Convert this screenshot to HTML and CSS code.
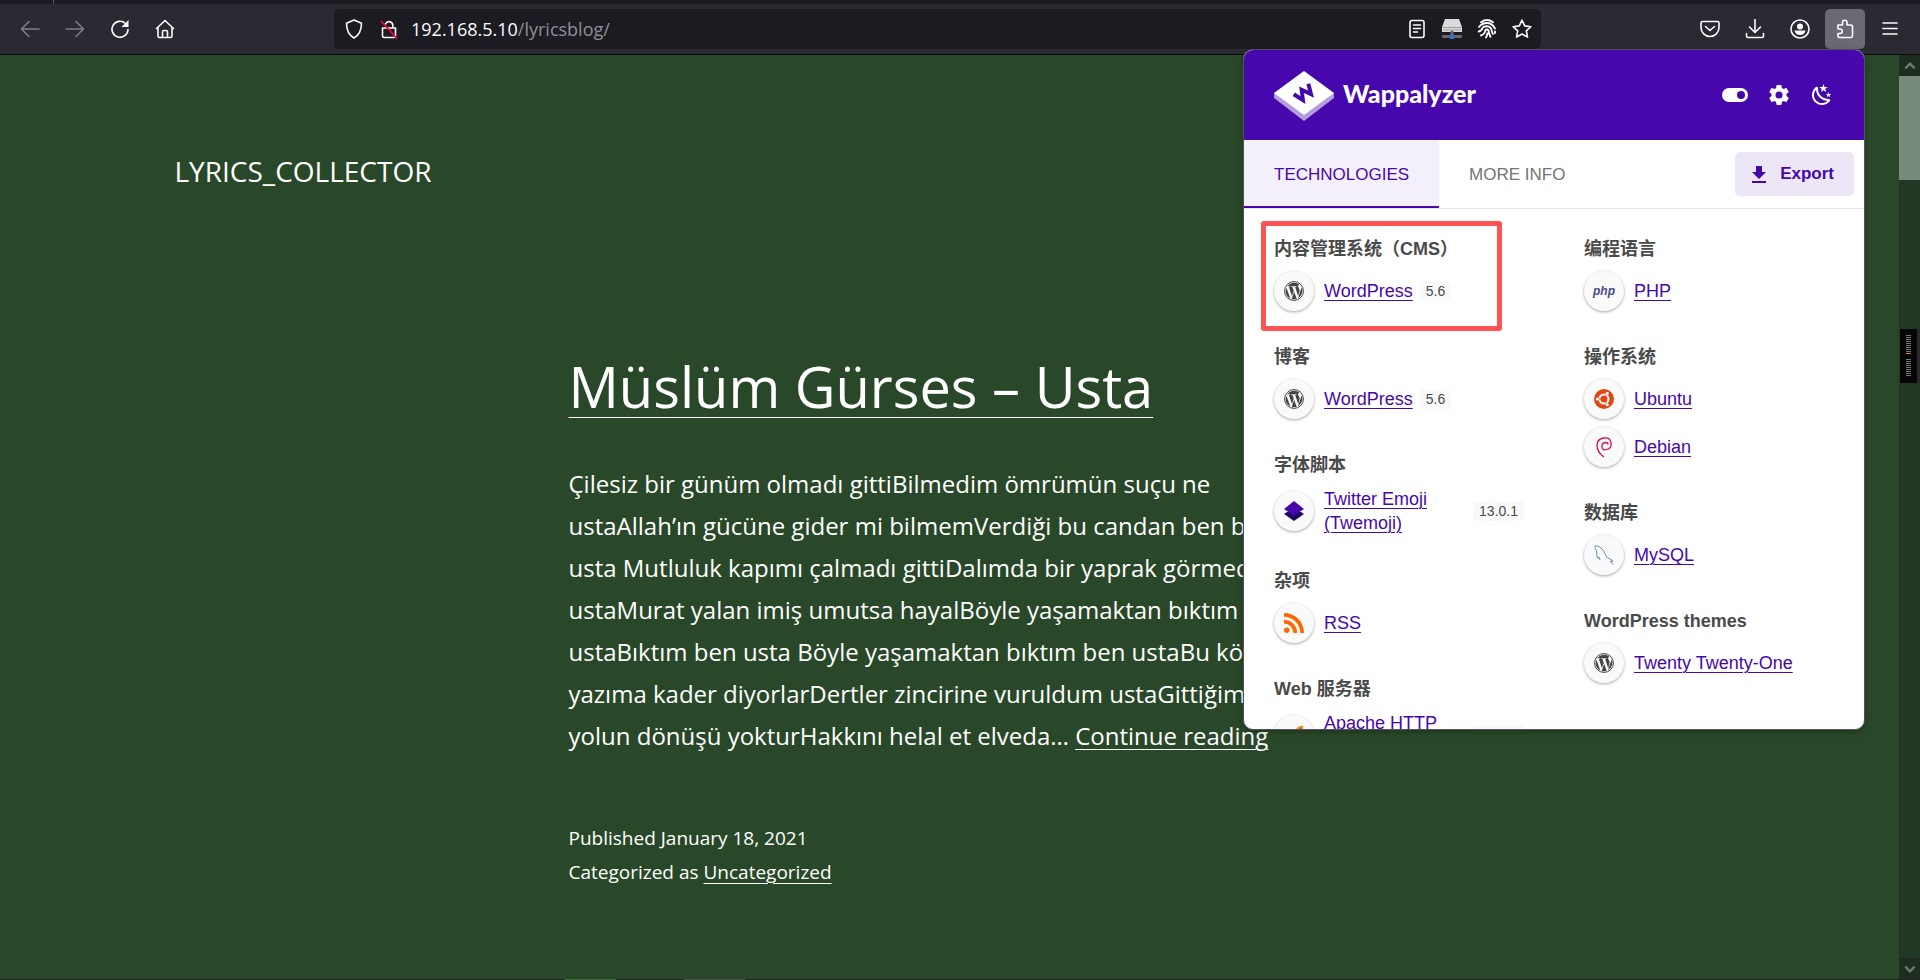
FILE: index.html
```html
<!DOCTYPE html>
<html lang="en">

<head>
  <meta charset="UTF-8" />
  <title>Lyrics_Collector</title>
  <link rel="stylesheet" href="styles.css">
</head>

<body>

  <!-- shared icons -->
  <svg class="sprite" aria-hidden="true">
    <symbol id="wp" viewBox="0 0 24 24">
      <circle cx="12" cy="12" r="11.300" fill="none" stroke="#464342" stroke-width="1.200" />
      <path fill="#464342" d="M2 12c0 4 2.300 7.400 5.600 9L2.900 8A9.900 9.900 0 0 0 2 12zm16.700-.5c0-1.200-.4-2.100-.8-2.800-.5-.8-1-1.500-1-2.300 0-.9.7-1.800 1.700-1.800h.1A10 10 0 0 0 3.700 6.500h.6c1.100 0 2.700-.1 2.700-.1.500 0 .6.800 0 .8 0 0-.5.1-1.100.1l3.600 10.800 2.200-6.500-1.600-4.300-1-.1c-.6 0-.5-.9 0-.8 0 0 1.700.1 2.700.1 1.100 0 2.700-.1 2.700-.1.600 0 .6.800.1.800 0 0-.6.100-1.200.1l3.600 10.700 1-3.300c.4-1.300.7-2.300.7-3.200zM12.200 12.900l-3 8.700a10 10 0 0 0 6.100-.2l-.1-.1zM20.800 7.200c0 1.800-.3 2.700-1 4.500l-3 8.900A10 10 0 0 0 20.800 7.200z" />
    </symbol>
  </svg>

  <div class="tabstrip"></div>

  <header class="toolbar">
    <nav class="nav-buttons">
      <button class="icon-btn dim" aria-label="Back">
        <svg class="icon" viewBox="0 0 20 20"><path d="M19 10H2M9 2.500L1.500 10 9 17.500" /></svg>
      </button>
      <button class="icon-btn dim" aria-label="Forward">
        <svg class="icon" viewBox="0 0 20 20"><path d="M1 10h17M11 2.500l7.500 7.500-7.500 7.500" /></svg>
      </button>
      <button class="icon-btn" aria-label="Reload">
        <svg class="icon" viewBox="0 0 20 20"><path d="M18 10.500A8 8 0 1 1 15.500 4.500" /><path class="fill" d="M18.500 1v7h-7z" /></svg>
      </button>
      <button class="icon-btn" aria-label="Home">
        <svg class="icon" viewBox="0 0 20 20"><path d="M1.500 9.500L10 1.500l8.500 8M3 8.500V17q0 1.500 1.500 1.500h11Q17 18.500 17 17V8.500M7.500 18v-5q0-1.500 1.500-1.500h2q1.500 0 1.500 1.500v5" /></svg>
      </button>
    </nav>

    <div class="urlbar">
      <svg class="icon" viewBox="0 0 20 20"><path d="M10 1l7.500 3.200c0 6.500-1.500 11.300-7.500 14.800C4 15.500 2.500 10.700 2.500 4.200z" /></svg>
      <svg class="icon" viewBox="0 0 20 20"><path d="M6.500 5a3.800 3.800 0 0 1 7.300 1.500V9M3.500 9h13v8q0 1.500-1.500 1.500H5Q3.500 18.500 3.500 17z" /><path class="slash" d="M2.500 2.500l15 16.500" /></svg>
      <div class="url" role="textbox" aria-label="Address">192.168.5.10<span>/lyricsblog/</span></div>
      <div class="url-actions">
        <svg class="icon" viewBox="0 0 20 20"><rect x="3" y="1.500" width="14" height="17" rx="2" /><path d="M6.500 6h7M6.500 9.500h7M6.500 13h4" /></svg>
        <svg class="icon" viewBox="0 0 20 20"><path fill="#dadada" stroke="none" d="M3 0h14l3 8v5H0V8z" /><path stroke="#9a9a9a" stroke-width="1" d="M1 8.500h18M2 11h16" /><path stroke="#68686c" stroke-width="3" d="M1 17.500h18M10 13v3" /><path fill="#2f6fd8" stroke="none" d="M8 15.500h4V20H8z" /></svg>
        <svg class="icon" viewBox="0 0 20 20"><path stroke-width="1.900" d="M4 3.200Q10-1.200 16 3.200M2 8Q5 4 10 4t8 5.500M1.800 12.500Q5 11.500 5.500 9 7 7 10 7.200q4 .3 4.700 4.300.5 2.500 1.300 3.500M4 16.500q4-1.500 4.500-5.500 1.500-1.300 3 .3.200 3.500 2 6.500M9 18.500q1.200-1.500 1.300-4M18 12.500v1.500" /></svg>
        <svg class="icon" viewBox="0 0 20 20"><path d="M10 1.200l2.700 5.700 6.200.8-4.600 4.200 1.200 6.200L10 15l-5.500 3.100 1.200-6.200L1.100 7.700l6.200-.8z" /></svg>
      </div>
    </div>

    <div class="tools">
      <button class="icon-btn" aria-label="Pocket">
        <svg class="icon" viewBox="0 0 20 20"><path d="M2.500 2.500h15q1.500 0 1.500 1.500v4.500a9 9 0 0 1-18 0V4q0-1.500 1.500-1.500zM5.500 7.500L10 11.500l4.500-4" /></svg>
      </button>
      <button class="icon-btn" aria-label="Downloads">
        <svg class="icon" viewBox="0 0 20 20"><path d="M10 0v13M4.500 8l5.500 5.500L15.500 8M1.500 14.500V17q0 1.500 1.500 1.500h14q1.500 0 1.500-1.500v-2.500" /></svg>
      </button>
      <button class="icon-btn" aria-label="Account">
        <svg class="icon" viewBox="0 0 20 20"><circle cx="10" cy="10" r="9" /><circle class="fill" cx="10" cy="7.500" r="3" /><path class="fill" d="M4.500 11.500h11q-1 4.500-5.500 4.500t-5.500-4.500z" /></svg>
      </button>
      <button class="icon-btn active" aria-label="Extensions">
        <svg class="icon" viewBox="0 0 20 20"><path d="M3 6h4.500V3.500a2.200 2.200 0 0 1 4.500 0V6h4q1.500 0 1.500 1.500V17q0 1.500-1.500 1.500H4.500Q3 18.500 3 17v-2.500h2a2.200 2.200 0 0 0 0-4.500H3z" /></svg>
      </button>
      <button class="icon-btn" aria-label="Menu">
        <svg class="icon" viewBox="0 0 20 20"><path d="M3 4h14M3 9.500h14M3 15h14" /></svg>
      </button>
    </div>
  </header>

  <div class="viewport">
    <main class="page">
      <p class="site-title">LYRICS_COLLECTOR</p>

      <article class="post">
        <h2 class="entry-title"><a href="#">Müslüm Gürses – Usta</a></h2>
        <p class="excerpt">
          Çilesiz bir günüm olmadı gittiBilmedim ömrümün suçu ne<br>
          ustaAllah’ın gücüne gider mi bilmemVerdiği bu candan ben bıktım<br>
          usta Mutluluk kapımı çalmadı gittiDalımda bir yaprak görmedim<br>
          ustaMurat yalan imiş umutsa hayalBöyle yaşamaktan bıktım ben<br>
          ustaBıktım ben usta Böyle yaşamaktan bıktım ben ustaBu kötü<br>
          yazıma kader diyorlarDertler zincirine vuruldum ustaGittiğim bu<br>
          yolun dönüşü yokturHakkını helal et elveda… <a href="#">Continue reading</a>
        </p>
        <footer class="entry-footer">
          Published January 18, 2021<br>
          Categorized as <a href="#">Uncategorized</a>
        </footer>
      </article>
    </main>

    <div class="scrollbar">
      <div class="scroll-arrow"><svg viewBox="0 0 12 12"><path d="M2 8l4-4 4 4" /></svg></div>
      <div class="scroll-thumb"></div>
      <div class="scroll-arrow end"><svg viewBox="0 0 12 12"><path d="M2 4l4 4 4-4" /></svg></div>
    </div>
  </div>

  <div class="taskbar-edge"><i></i><i></i></div>

  <div class="meter"><i></i><b></b><i></i></div>

  <section class="popup">
    <div class="popup-header">
      <svg class="logo" viewBox="0 0 60 50">
        <path fill="#b59ddd" d="M0 27L30 50 60 27V22H0z" />
        <path fill="#fff" d="M30 0l30 22-30 22L0 22z" />
        <path class="logo-w" d="M-9-5l4 10L0-4l5 9L9-5" transform="translate(30 22) rotate(-36)" />
      </svg>
      <span class="brand">Wappalyzer</span>
      <div class="popup-actions">
        <button class="plain-btn" aria-label="Toggle">
          <svg width="26" height="14" viewBox="0 0 26 14"><rect width="26" height="14" rx="7" fill="#fff" /><circle cx="19" cy="7" r="4" fill="#4608ad" /></svg>
        </button>
        <button class="plain-btn" aria-label="Settings">
          <svg width="24" height="24" viewBox="0 0 24 24"><path fill="#fff" d="M12 15.500A3.500 3.500 0 0 1 8.500 12 3.500 3.500 0 0 1 12 8.500a3.500 3.500 0 0 1 3.500 3.500 3.500 3.500 0 0 1-3.500 3.500m7.430-2.530c.04-.32.07-.64.07-.97s-.03-.66-.07-1l2.110-1.630c.19-.15.24-.42.12-.64l-2-3.460c-.12-.22-.39-.31-.61-.22l-2.490 1c-.52-.39-1.060-.73-1.690-.98l-.37-2.650A.5.5 0 0 0 14 2h-4c-.25 0-.46.18-.5.42l-.37 2.650c-.63.25-1.170.59-1.690.98l-2.490-1c-.22-.09-.49 0-.61.22l-2 3.460c-.13.22-.07.49.12.64L4.570 11c-.04.34-.07.67-.07 1s.03.65.07.97l-2.110 1.660c-.19.15-.25.42-.12.64l2 3.460c.12.22.39.3.61.22l2.490-1.010c.52.4 1.060.74 1.690.99l.37 2.650c.04.24.25.42.5.42h4c.25 0 .46-.18.5-.42l.37-2.650c.63-.26 1.170-.59 1.690-.99l2.490 1.010c.22.08.49 0 .61-.22l2-3.460c.12-.22.07-.49-.12-.64z" /></svg>
        </button>
        <button class="plain-btn" aria-label="Dark mode">
          <svg width="24" height="24" viewBox="0 0 24 24"><path fill="#fff" d="M17.750 4.090l-2.530 1.940.91 3.060-2.630-1.810-2.630 1.810.91-3.060-2.530-1.940L12.440 4l1.060-3 1.060 3zM21.250 11l-1.640 1.250.59 1.980-1.700-1.170-1.700 1.170.59-1.980L15.750 11l2.060-.05L18.500 9l.69 1.950zM18.970 15.950c.83-.08 1.720 1.100 1.190 1.850-.32.45-.66.87-1.080 1.270C15.170 23 8.840 23 4.940 19.070c-3.910-3.900-3.910-10.240 0-14.140.4-.4.820-.76 1.270-1.080.75-.53 1.930.36 1.850 1.190-.27 2.860.69 5.830 2.890 8.020a9.960 9.960 0 0 0 8.020 2.890m-1.640 2.020a12.080 12.080 0 0 1-7.800-3.470c-2.170-2.190-3.330-5-3.490-7.820-2.810 3.140-2.700 7.960.31 10.980 3.020 3.010 7.840 3.120 10.980.31z" /></svg>
        </button>
      </div>
    </div>

    <div class="tabs">
      <button class="tab selected">TECHNOLOGIES</button>
      <button class="tab">MORE INFO</button>
      <button class="export">
        <svg width="14" height="17" viewBox="0 0 14 17"><path fill="#4608ad" d="M4 0h6v6h4l-7 7-7-7h4zM0 15h14v2H0z" /></svg>
        Export
      </button>
    </div>

    <div class="columns">
      <div class="column">
        <div class="category">
          <h3>内容管理系统（CMS）</h3>
          <div class="tech"><span class="badge"><svg><use href="#wp" /></svg></span><a href="#">WordPress</a><span class="version">5.6</span></div>
        </div>
        <div class="category">
          <h3>博客</h3>
          <div class="tech"><span class="badge"><svg><use href="#wp" /></svg></span><a href="#">WordPress</a><span class="version">5.6</span></div>
        </div>
        <div class="category">
          <h3>字体脚本</h3>
          <div class="tech"><span class="badge"><svg viewBox="0 0 20 20"><path fill="#1e0a5c" d="M0 13l10 7 10-7-3-2H3z" /><path fill="#4608ad" d="M10 0l10 8-10 7L0 8z" /></svg></span><a href="#">Twitter Emoji (Twemoji)</a><span class="version">13.0.1</span></div>
        </div>
        <div class="category">
          <h3>杂项</h3>
          <div class="tech"><span class="badge"><svg viewBox="0 0 20 20"><circle cx="2.700" cy="17.300" r="2.700" fill="#ff6600" /><path fill="none" stroke="#ff6600" stroke-width="3.800" d="M0 8.700A11.300 11.300 0 0 1 11.300 20M0 1.900A18.100 18.100 0 0 1 18.100 20" /></svg></span><a href="#">RSS</a></div>
        </div>
        <div class="category">
          <h3>Web 服务器</h3>
          <div class="tech"><span class="badge"><svg viewBox="0 0 20 20"><path fill="#f28a20" d="M19 1Q15 0 11 5T5 19Q8 16 12 14T18 7 19 1z" /><path fill="none" stroke="#c2402b" d="M5 19Q9 9 17 3" /></svg></span><a href="#">Apache HTTP Server</a><span class="version">2.4.41</span></div>
        </div>
      </div>

      <div class="column">
        <div class="category">
          <h3>编程语言</h3>
          <div class="tech"><span class="badge php">php</span><a href="#">PHP</a></div>
        </div>
        <div class="category">
          <h3>操作系统</h3>
          <div class="tech"><span class="badge"><svg viewBox="0 0 20 20"><circle cx="10" cy="10" r="10" fill="#dd4814" /><circle cx="10" cy="10" r="4.500" fill="none" stroke="#fff" stroke-width="2" /><path stroke="#dd4814" d="M10 10H4M10 10l3.500-6M10 10l3.500 6" /><circle cx="3.400" cy="10" r="1.500" fill="#fff" /><circle cx="13.300" cy="4.300" r="1.500" fill="#fff" /><circle cx="13.300" cy="15.700" r="1.500" fill="#fff" /></svg></span><a href="#">Ubuntu</a></div>
          <div class="tech"><span class="badge"><svg viewBox="0 0 20 20"><path fill="none" stroke="#d70a53" stroke-width="1.300" d="M10 20Q3 15 3 8.500T9.500 1Q16 0 17 5.500T13 12.500Q8.500 14 8 10t3.500-4.500q2.500 0 2.500 2" /></svg></span><a href="#">Debian</a></div>
        </div>
        <div class="category">
          <h3>数据库</h3>
          <div class="tech"><span class="badge"><svg viewBox="0 0 20 20"><path fill="none" stroke="#5d87a1" stroke-width=".9" d="M6 15L5 12Q4 14 3.500 13 2.500 9 2.500 6 0 2 1 1q3-1 6 2 3 2 4.500 7 1.500 3.500 4.500 4l3 2-3 .5 3.500 3" /></svg></span><a href="#">MySQL</a></div>
        </div>
        <div class="category">
          <h3>WordPress themes</h3>
          <div class="tech"><span class="badge"><svg><use href="#wp" /></svg></span><a href="#">Twenty Twenty-One</a></div>
        </div>
      </div>
    </div>

    <div class="highlight"></div>
  </section>

</body>

</html>
```
FILE: styles.css
```css
* {
  box-sizing: border-box;
}

body {
  margin: 0;
  height: 100vh;
  display: flex;
  flex-direction: column;
  overflow: hidden;
  position: relative;
  background: #294829;
  font-family: "Open Sans", "Noto Sans", sans-serif;
  color: #fff;
}

a {
  color: inherit;
}

button {
  border: 0;
  padding: 0;
  background: none;
  font: inherit;
  color: inherit;
}

.sprite {
  display: none;
}

/* Browser toolbar */
.tabstrip {
  height: 4px;
  flex: none;
  padding-left: 53px;
  background: #1c1b22;
}

.tabstrip::before {
  content: "";
  display: block;
  width: 1px;
  height: 4px;
  background: #55545c;
}

.toolbar {
  height: 51px;
  flex: none;
  display: flex;
  align-items: center;
  background: #2b2a33;
  border-bottom: 1px solid #0c0c0d;
  color: #fbfbfe;
}

.nav-buttons {
  display: flex;
  gap: 5px;
  padding-left: 10px;
}

.icon-btn {
  width: 40px;
  height: 40px;
  display: flex;
  align-items: center;
  justify-content: center;
  border-radius: 5px;
}

.dim {
  opacity: 0.4;
}

.active {
  background: #6b6a74;
}

.icon {
  width: 20px;
  height: 20px;
  flex: none;
  fill: none;
  stroke: currentColor;
  stroke-width: 1.6;
  stroke-linecap: round;
  stroke-linejoin: round;
}

.icon .fill {
  fill: currentColor;
  stroke: none;
}

.icon .slash {
  stroke: #ff0039;
}

.urlbar {
  flex: 1;
  height: 40px;
  display: flex;
  align-items: center;
  gap: 15px;
  margin-left: 149px;
  padding: 0 9px 0 10px;
  background: #1c1b22;
  border-radius: 5px;
}

.url {
  flex: 1;
  margin-left: -3px;
  font-size: 18px;
}

.url span {
  color: #8f8f95;
}

.url-actions {
  display: flex;
  gap: 15px;
}

.tools {
  display: flex;
  gap: 5px;
  margin-left: 149px;
  padding-right: 10px;
}

/* Blog page */
.viewport {
  flex: 1;
  min-height: 0;
  display: flex;
}

.page {
  flex: 1;
}

.site-title {
  max-width: 1550px;
  margin: 0 auto;
  padding-top: 95px;
  font-size: 28px;
  line-height: 42px;
}

.post {
  max-width: 762px;
  margin: 152px auto 0;
}

.entry-title {
  margin: 0;
  font-size: 56px;
  line-height: 84px;
  font-weight: 400;
}

.entry-title a {
  text-decoration-thickness: 1px;
  text-underline-offset: 9px;
}

.excerpt {
  margin: 35px 0 0;
  font-size: 24px;
  line-height: 42px;
  white-space: nowrap;
}

.excerpt a,
.entry-footer a {
  text-decoration-thickness: 1px;
  text-underline-offset: 4px;
}

.entry-footer {
  margin-top: 64px;
  font-size: 19px;
  line-height: 34px;
}

.scrollbar {
  width: 21px;
  display: flex;
  flex-direction: column;
  background: #223824;
}

.scroll-arrow {
  height: 21px;
  display: flex;
  align-items: center;
  justify-content: center;
  background: #1e2d20;
}

.scroll-arrow svg {
  width: 14px;
  fill: none;
  stroke: #6d7a6e;
  stroke-width: 2;
}

.scroll-arrow.end {
  margin-top: auto;
}

.scroll-thumb {
  height: 104px;
  background: #788a79;
}

.taskbar-edge {
  height: 1px;
  flex: none;
  display: flex;
  gap: 68px;
  padding-left: 565px;
  background: #1d2620;
}

.taskbar-edge i {
  width: 51px;
  background: #3c6b3c;
}

.taskbar-edge i + i {
  width: 61px;
  background: #4a4f4a;
}

/* Level meter docked over the right edge */
.meter {
  position: absolute;
  top: 329px;
  right: 0;
  width: 20px;
  height: 54px;
  padding: 6px 6px 0;
  background: #050505;
  border-right: 3px solid #2a2a2a;
}

.meter i {
  display: block;
  height: 18px;
  margin-bottom: 6px;
  background: repeating-linear-gradient(#777 0 1px, #050505 1px 2px);
}

.meter b {
  display: block;
  height: 1px;
  margin: -6px 0 5px;
  background: #d8861a;
}

/* Extension popup */
.popup {
  position: absolute;
  top: 49px;
  right: 55px;
  width: 622px;
  height: 681px;
  overflow: hidden;
  background: #fff;
  border: 1px solid #52525e;
  border-radius: 10px;
  font-family: "Liberation Sans", "Noto Sans CJK SC", sans-serif;
  box-shadow: 0 2px 6px rgba(0, 0, 0, 0.3);
}

.popup-header {
  height: 90px;
  display: flex;
  align-items: center;
  padding: 2px 30px 0;
  background: #4608ad;
}

.logo {
  width: 60px;
  height: 50px;
}

.logo-w {
  fill: none;
  stroke: #4608ad;
  stroke-width: 4;
}

.brand {
  margin-left: 9px;
  padding-bottom: 7px;
  font-family: Lato, sans-serif;
  font-size: 25px;
  font-weight: 900;
}

.popup-actions {
  display: flex;
  align-items: center;
  gap: 19px;
  margin-left: auto;
  padding-bottom: 2px;
}

.plain-btn {
  display: flex;
}

.tabs {
  height: 69px;
  display: flex;
  align-items: center;
  border-bottom: 1px solid #e4e4e4;
  font-size: 17px;
}

.tab {
  height: 68px;
  padding: 4px 30px 0;
  border-bottom: 2px solid transparent;
  color: #757575;
}

.tab.selected {
  background: #f4f0fb;
  border-color: #4608ad;
  color: #4608ad;
}

.export {
  display: flex;
  align-items: center;
  gap: 14px;
  height: 44px;
  margin: 0 10px 0 auto;
  padding: 0 20px 0 17px;
  background: #ede6f7;
  border-radius: 5px;
  color: #4608ad;
  font-weight: 700;
}

.columns {
  display: flex;
}

.column {
  flex: 1;
  display: flex;
  flex-direction: column;
  gap: 27px;
  padding: 25px 30px;
}

.category h3 {
  margin: 0 0 3px;
  font-size: 18px;
  line-height: 30px;
  color: #4a4a4a;
}

.tech {
  display: flex;
  align-items: center;
  padding: 4px 0;
  font-size: 18px;
  line-height: 24px;
  color: #4608ad;
}

.tech a {
  text-decoration-thickness: 1px;
  text-underline-offset: 3px;
}

.badge {
  flex: none;
  width: 40px;
  height: 40px;
  display: flex;
  align-items: center;
  justify-content: center;
  margin-right: 10px;
  background: #fafafa;
  border-radius: 50%;
  box-shadow: 0 1px 3px rgba(0, 0, 0, 0.35);
}

.badge svg {
  width: 20px;
  height: 20px;
}

.php {
  font-size: 12px;
  font-weight: 700;
  font-style: italic;
  color: #484c89;
}

.version {
  margin-left: 7px;
  padding: 0 6px;
  background: #f9f9f9;
  border-radius: 4px;
  font-size: 14px;
  line-height: 20px;
  color: #4a4a4a;
}

/* Red marker around the CMS entry */
.highlight {
  position: absolute;
  top: 171px;
  left: 17px;
  width: 241px;
  height: 110px;
  border: 5px solid #ff5252;
  border-radius: 3px;
}
```
